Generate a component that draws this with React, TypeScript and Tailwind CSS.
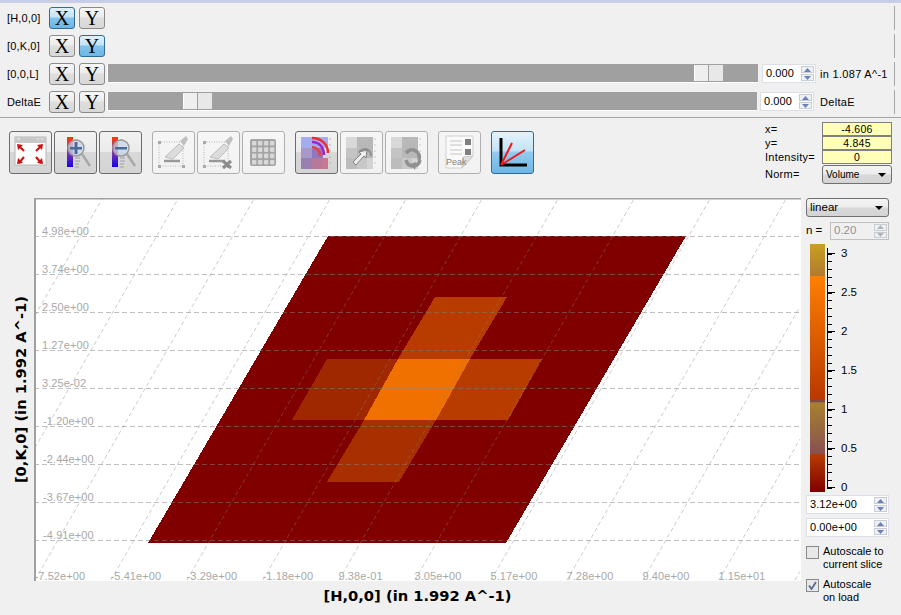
import React from "react";

const sans = "font-['Liberation_Sans',Arial,sans-serif]";

const hLines = [
  { y: 236, label: "4.98e+00" },
  { y: 274, label: "3.74e+00" },
  { y: 312, label: "2.50e+00" },
  { y: 350, label: "1.27e+00" },
  { y: 388, label: "3.25e-02" },
  { y: 426, label: "-1.20e+00" },
  { y: 464, label: "-2.44e+00" },
  { y: 502, label: "-3.67e+00" },
  { y: 540, label: "-4.91e+00" },
];

const bottomLabels = [
  "-7.52e+00",
  "-5.41e+00",
  "-3.29e+00",
  "-1.18e+00",
  "9.38e-01",
  "3.05e+00",
  "5.17e+00",
  "7.28e+00",
  "9.40e+00",
  "1.15e+01",
];

const sliceCells = [
  { points: "328,236 686,236 506,543 148,543", fill: "#800000" },
  { points: "435,297 507,297 470,359 398,359", fill: "#b83c00" },
  { points: "327,359 398,359 364,420 292,420", fill: "#a02800" },
  { points: "470,359 542,359 508,420 436,420", fill: "#b83c00" },
  { points: "364,420 436,420 399,482 327,482", fill: "#a83000" },
  { points: "398,359 470,359 436,420 364,420", fill: "#f07000" },
];

const Plot = () => (
  <svg width={767} height={383} viewBox="34 198 767 383" className="block shrink-0 overflow-visible bg-white">
    {sliceCells.map((c) => (
      <polygon key={c.points} points={c.points} fill={c.fill} shapeRendering="crispEdges" />
    ))}
    {hLines.map((l) => (
      <line key={l.y} x1={34} x2={800} y1={l.y + 0.5} y2={l.y + 0.5} stroke="#808080" strokeOpacity={0.5} strokeDasharray="5 3" />
    ))}
    {Array.from({ length: 13 }, (_, i) => i - 2).map((k) => {
      // clip the sloped grid lines to the canvas by hand, the svg itself overflows for the labels
      const x0 = 35 + 76 * k;
      const startY = x0 < 35 ? 580 - ((35 - x0) * 381) / 219 : 580;
      const startX = Math.max(x0, 35);
      const endX = Math.min(x0 + 219, 800);
      const endY = 580 - ((endX - x0) * 381) / 219;
      return (
        <line
          key={k}
          x1={startX}
          y1={startY}
          x2={endX}
          y2={endY}
          stroke="#808080"
          strokeOpacity={0.42}
          strokeDasharray="4 3"
        />
      );
    })}
    {hLines.map((l) => (
      <text key={l.label} x={l.label.startsWith("-") ? 43 : 42} y={l.y - 1} fontSize={11} letterSpacing={0.1} fill="#a8a8a8" fontFamily="'Liberation Sans',Arial,sans-serif">
        {l.label}
      </text>
    ))}
    {bottomLabels.map((t, i) => (
      <text key={t} x={34.5 + 76 * i} y={580} fontSize={11} letterSpacing={0.1} fill="#a8a8a8" fontFamily="'Liberation Sans',Arial,sans-serif">
        {t}
      </text>
    ))}
    <rect x={34} y={198} width={767} height={1.5} fill="#a0a0a0" />
    <rect x={34} y={198} width={2} height={383} fill="#a0a0a0" />
  </svg>
);

const AxisButton = ({ label, active }: { label: string; active?: boolean }) => (
  <button
    className={`flex h-[22px] w-[26px] items-center justify-center rounded-[3px] border font-['Liberation_Serif',serif] text-[20px] leading-none text-black ${
      active
        ? "border-[#2f6b96] bg-[linear-gradient(#e0f1fb,#c4e3f6_45%,#84c4ec_50%,#6cb6e6)]"
        : "border-[#8a8a8a] bg-[linear-gradient(#f7f7f7,#ececec_45%,#dedede_50%,#d8d8d8)]"
    }`}
  >
    {label}
  </button>
);

const Arrows = ({ dim }: { dim?: boolean }) => (
  <div className="flex h-full w-[13px] flex-col gap-px">
    {[0, 1].map((i) => (
      <div key={i} className="flex flex-1 items-center justify-center border border-[#c8ccd4] bg-[#eef0f4]">
        <svg width={7} height={4} viewBox="0 0 7 4">
          <polygon points={i === 0 ? "3.5,0 7,4 0,4" : "0,0 7,0 3.5,4"} fill={dim ? "#b4b4b4" : "#6a80b8"} />
        </svg>
      </div>
    ))}
  </div>
);

const Spin = ({ value, className }: { value: string; className: string }) => (
  <div className={`flex items-center justify-between border border-[#dcdfe6] bg-white py-px pr-px pl-[3px] text-[11px] tracking-[0.1px] text-black ${className}`}>
    <span>{value}</span>
    <Arrows />
  </div>
);

const Slider = ({ width, thumbAt }: { width: string; thumbAt: string }) => (
  <div className={`mb-px flex h-[19px] items-stretch border-b border-l border-white bg-[#a0a0a0] ${width}`}>
    <div className={`${thumbAt} shrink-0`} />
    <div className="my-px flex gap-px">
      <div className="w-[14px] border-l border-white bg-[#efefef]" />
      <div className="w-[14px] bg-[#e8e8e8]" />
    </div>
  </div>
);

const Row = ({
  name,
  xOn,
  yOn,
  children,
}: {
  name: string;
  xOn?: boolean;
  yOn?: boolean;
  children?: React.ReactNode;
}) => (
  <div className="flex h-[22px] items-center">
    <div className="w-[49px] pl-[7px] text-[11px] tracking-[0.15px] text-black">{name}</div>
    <AxisButton label="X" active={xOn} />
    <div className="w-[4px]" />
    <AxisButton label="Y" active={yOn} />
    <div className="flex flex-1 items-center pl-[2px]">{children}</div>
    <div className="mr-[6px] h-[24px] w-px bg-[#a8a8a8]" />
  </div>
);

const ToolButton = ({
  children,
  variant = "normal",
  className = "",
}: {
  children: React.ReactNode;
  variant?: "normal" | "off" | "on";
  className?: string;
}) => {
  const look =
    variant === "on"
      ? "border-[#2f6b96] bg-[linear-gradient(#e4f3fc,#c4e3f6_45%,#94cbee_50%,#6cb6e6)]"
      : variant === "off"
        ? "border-[#b0b0b0] bg-[linear-gradient(#f6f6f6,#f2f2f2)]"
        : "border-[#6c6c6c] bg-[linear-gradient(#f2f2f2,#ebebeb_48%,#d8d8d8_50%,#d4d4d4)]";
  return (
    <div className={`h-[43px] w-[43px] shrink-0 rounded-[3px] border-[1.5px] ${look} ${className}`}>
      <svg width={40} height={40} viewBox="0 0 40 40" className="block">
        {children}
      </svg>
    </div>
  );
};

const ExpandIcon = () => (
  <g>
    <rect x={5} y={5} width={31} height={28} fill="#fff" stroke="#b8b8b8" />
    <rect x={5} y={5} width={31} height={6} fill="#c8c8c8" />
    <path d="M7 7h3M27 7h2M31 7h2" stroke="#f0f0f0" />
    <g fill="none" stroke="#d01010" strokeWidth={2}>
      <path d="M9 14 L14 19M9 31 L14 25M31 14 L26 19M31 31 L26 25" />
    </g>
    <g fill="#d01010">
      <polygon points="7,12 13,13 8,18" />
      <polygon points="7,32 8,26 13,31" />
      <polygon points="33,12 27,13 32,18" />
      <polygon points="33,32 32,26 27,31" />
    </g>
  </g>
);

const ZoomIcon = ({ plus, id }: { plus?: boolean; id: string }) => (
  <g>
    <defs>
      <linearGradient id={id} x1="0" y1="0" x2="0" y2="1">
        <stop offset="0" stopColor="#ff3a00" />
        <stop offset="0.45" stopColor="#9040a0" />
        <stop offset="1" stopColor="#1800f0" />
      </linearGradient>
    </defs>
    <rect x={12} y={5} width={6} height={30} fill={`url(#${id})`} />
    <path d="M20 8h3M20 26h5M20 29h5M20 32h4M20 35h4" stroke="#a0a0a0" strokeWidth={1} />
    <path d="M27 22 L35 34" stroke="#a8a8a8" strokeWidth={2.5} />
    <circle cx={21} cy={16} r={8} fill="#c8d4e8" fillOpacity={0.75} stroke="#9a9a9a" strokeWidth={1.5} />
    <rect x={15} y={15} width={12} height={2.5} fill="#4a6a9a" />
    {plus && <rect x={19.5} y={10} width={3} height={12} fill="#4a6a9a" />}
  </g>
);

const BrushIcon = ({ cross }: { cross?: boolean }) => (
  <g>
    <rect x={6} y={10} width={24} height={24} fill="none" stroke="#b4b4b4" strokeDasharray="1 1.5" />
    <g fill="#a8a8a8">
      <rect x={5} y={9} width={3} height={3} />
      <rect x={5} y={33} width={3} height={3} />
      <rect x={29} y={33} width={3} height={3} />
    </g>
    <path d="M12 25 L26 12 L31 16 L20 27 Z" fill="#dcdcdc" stroke="#bcbcbc" />
    <path d="M27 9 L33 4 L35 7 L31 14 Z" fill="#c0c0c0" />
    <path d="M11 29 H27" stroke="#989898" strokeWidth={2.5} />
    {cross && <path d="M25 29 L33 36 M33 29 L25 36" stroke="#8c8c8c" strokeWidth={3} />}
  </g>
);

const GridIcon = () => (
  <g>
    <rect x={7} y={7} width={26} height={27} rx={2} fill="#a4a4a4" />
    {[0, 1, 2, 3].map((r) =>
      [0, 1, 2, 3].map((c) => (
        <rect key={`${r}-${c}`} x={9 + c * 6} y={9 + r * 6.3} width={4.4} height={4.6} rx={1} fill="#d8d8d8" />
      )),
    )}
  </g>
);

const SliceIcon = () => (
  <g>
    <rect x={5} y={5} width={11} height={11} fill="#a4acf0" />
    <rect x={5} y={16} width={11} height={10} fill="#a898c8" />
    <rect x={5} y={26} width={11} height={11} fill="#9880b0" />
    <rect x={16} y={5} width={16} height={11} fill="#a4acf0" />
    <rect x={16} y={16} width={11} height={10} fill="#9078c0" />
    <rect x={16} y={26} width={10} height={11} fill="#b87898" />
    <rect x={26} y={26} width={6} height={11} fill="#c87890" />
    <path d="M16 6 C25 6 32 12 32 21" fill="none" stroke="#e83030" strokeWidth={2.5} />
    <path d="M16 10 C23 10 28 15 28 23" fill="none" stroke="#a020d0" strokeWidth={2.5} />
    <path d="M16 15 C20 15 24 18 24 24" fill="none" stroke="#e84040" strokeWidth={2.5} />
    <path d="M33 7h2M33 13h2M33 19h2M33 25h2M33 31h2" stroke="#b0b0b0" />
  </g>
);

const GraySlice = () => (
  <g>
    <rect x={5} y={5} width={11} height={11} fill="#d8d8d8" />
    <rect x={5} y={16} width={11} height={10} fill="#c4c4c4" />
    <rect x={5} y={26} width={11} height={11} fill="#bcbcbc" />
    <rect x={16} y={5} width={16} height={21} fill="#b8b8b8" />
    <rect x={16} y={26} width={10} height={11} fill="#c8c8c8" />
    <rect x={26} y={26} width={6} height={11} fill="#d4d4d4" />
    <path d="M33 7h2M33 13h2M33 19h2M33 25h2M33 31h2" stroke="#c8c8c8" />
  </g>
);

const PeakIcon = () => (
  <g>
    <path d="M7 4 H34 V24 L23 36 H7 Z" fill="#fafafa" stroke="#d0d0d0" />
    <path d="M23 36 L24 25 L34 24 Z" fill="#e0e0e0" stroke="#c8c8c8" />
    <path d="M11 9h12M11 13h12M11 18h12M11 22h12" stroke="#c4c4c4" />
    <g fill="#808080">
      <rect x={26} y={7} width={6} height={6} />
      <rect x={26} y={17} width={6} height={6} />
    </g>
    <text x={7} y={33} fontSize={9} fill="#808080" fontFamily="'Liberation Sans',Arial,sans-serif">
      Peak
    </text>
  </g>
);

const toolbar = (
  <div className="flex items-start pl-[9px] pt-[13px]">
    <ToolButton>
      <ExpandIcon />
    </ToolButton>
    <ToolButton className="ml-[2px]">
      <ZoomIcon plus id="zoomIn" />
    </ToolButton>
    <ToolButton className="ml-[2px]">
      <ZoomIcon id="zoomOut" />
    </ToolButton>
    <ToolButton variant="off" className="ml-[10px]">
      <BrushIcon />
    </ToolButton>
    <ToolButton variant="off" className="ml-[2px]">
      <BrushIcon cross />
    </ToolButton>
    <ToolButton variant="off" className="ml-[2px]">
      <GridIcon />
    </ToolButton>
    <ToolButton className="ml-[10px]">
      <SliceIcon />
    </ToolButton>
    <ToolButton variant="off" className="ml-[2px]">
      <GraySlice />
      <path d="M18 20 C24 14 30 18 30 24" fill="none" stroke="#909090" strokeWidth={2} />
      <path d="M12 30 L20 22 L18 20 L26 18 L25 26 L23 24 L15 33 Z" fill="#eee" stroke="#808080" />
    </ToolButton>
    <ToolButton variant="off" className="ml-[2px]">
      <GraySlice />
      <path d="M20 21 C26 14 35 20 33 28" fill="none" stroke="#909090" strokeWidth={3.5} />
      <path d="M34 28 C32 36 22 36 20 28" fill="none" stroke="#909090" strokeWidth={3.5} />
      <polygon points="24,32 30,30 29,38" fill="#909090" />
    </ToolButton>
    <ToolButton variant="off" className="ml-[10px]">
      <PeakIcon />
    </ToolButton>
    <ToolButton variant="on" className="ml-[10px]">
      <path d="M9 6 V33 H35" fill="none" stroke="#000" strokeWidth={3} />
      <path d="M9 33 L20 11 M9 33 L33 18" fill="none" stroke="#f01818" strokeWidth={2} />
    </ToolButton>
  </div>
);

const readouts = [
  { name: "x=", value: "-4.606" },
  { name: "y=", value: "4.845" },
  { name: "Intensity=", value: "0" },
];

const Combo = ({ label, className }: { label: string; className: string }) => (
  <div
    className={`flex items-center justify-between rounded-[3px] border border-[#707070] bg-[linear-gradient(#f4f4f4,#ececec_45%,#d8d8d8_55%,#d4d4d4)] pl-[3px] pr-[5px] text-black ${className}`}
  >
    <span>{label}</span>
    <svg width={8} height={4} viewBox="0 0 8 4">
      <polygon points="0,0 8,0 4,4" fill="#000" />
    </svg>
  </div>
);

const Info = () => (
  <div className="mr-[9px] flex w-[127px] flex-col pt-[4px] text-[11px] tracking-[0.25px]">
    {readouts.map((r) => (
      <div key={r.name} className="flex h-[14px] items-center">
        <div className="w-[57px] text-black">{r.name}</div>
        <div className="h-full w-[70px] border border-[#808080] bg-[#ffffb8] text-center text-[10.5px] leading-[12px] text-black">
          {r.value}
        </div>
      </div>
    ))}
    <div className="mt-px flex h-[19px] items-center">
      <div className="w-[57px] text-black">Norm=</div>
      <Combo label="Volume" className="h-full w-[70px] text-[10px] tracking-normal" />
    </div>
  </div>
);

const Colorbar = () => {
  const majors = [
    { y: 253, t: "3" },
    { y: 292, t: "2.5" },
    { y: 331, t: "2" },
    { y: 370, t: "1.5" },
    { y: 409, t: "1" },
    { y: 448, t: "0.5" },
    { y: 487, t: "0" },
  ];
  const minors = Array.from({ length: 31 }, (_, i) => 487.5 - i * 7.8);
  return (
    <svg width={84} height={248} viewBox="806 244 84 248" className="mt-[4px] block">
      <defs>
        <linearGradient id="cmap" x1="0" y1="0" x2="0" y2="1">
          <stop offset="0" stopColor="#c8a020" />
          <stop offset="0.129" stopColor="#b07a30" />
          <stop offset="0.129" stopColor="#ff8000" />
          <stop offset="0.63" stopColor="#b83800" />
          <stop offset="0.63" stopColor="#804848" />
          <stop offset="0.637" stopColor="#804848" />
          <stop offset="0.64" stopColor="#a88030" />
          <stop offset="0.847" stopColor="#885050" />
          <stop offset="0.847" stopColor="#b83c00" />
          <stop offset="1" stopColor="#800000" />
        </linearGradient>
      </defs>
      <rect x={810} y={244} width={15} height={248} fill="url(#cmap)" />
      <line x1={827.5} x2={827.5} y1={248} y2={488} stroke="#000" />
      {minors.map((y) => (
        <line key={y} x1={827} x2={832} y1={Math.round(y) + 0.5} y2={Math.round(y) + 0.5} stroke="#000" />
      ))}
      {majors.map((m) => (
        <g key={m.t}>
          <line x1={827} x2={835} y1={m.y + 0.5} y2={m.y + 0.5} stroke="#000" />
          <text x={841} y={m.y + 4} fontSize={11.5} fill="#000" fontFamily="'Liberation Sans',Arial,sans-serif">
            {m.t}
          </text>
        </g>
      ))}
    </svg>
  );
};

const Check = ({ on, lines, className }: { on?: boolean; lines: string[]; className: string }) => (
  <div className={`flex items-start gap-[4px] text-[11px] leading-[13px] text-black ${className}`}>
    <div className="mt-px flex h-[13px] w-[13px] items-center justify-center border border-[#8a8a8a] bg-[#e8e8e8]">
      {on && (
        <svg width={9} height={9} viewBox="0 0 9 9">
          <path d="M1 4.5 L3.5 8 L8 1" fill="none" stroke="#5a6a90" strokeWidth={1.8} />
        </svg>
      )}
    </div>
    <div>
      {lines.map((l) => (
        <div key={l}>{l}</div>
      ))}
    </div>
  </div>
);

const Side = () => (
  <div className="ml-[5px] flex w-[84px] flex-col text-[11.5px]">
    <Combo label="linear" className="h-[19px] w-[83px] text-[11.5px]" />
    <div className="mt-[5px] flex h-[18px] items-center">
      <span className="w-[24px] text-black">n =</span>
      <div className="flex h-full w-[59px] items-center justify-between border border-[#c0c0c0] bg-[#f0f0f0] py-px pr-px pl-[3px] text-[#909090]">
        <span>0.20</span>
        <Arrows dim />
      </div>
    </div>
    <Colorbar />
    <Spin value="3.12e+00" className="mt-[3px] h-[19px] w-[83px]" />
    <Spin value="0.00e+00" className="mt-[4px] h-[19px] w-[83px]" />
    <Check lines={["Autoscale to", "current slice"]} className="mt-[8px]" />
    <Check on lines={["Autoscale", "on load"]} className="mt-[7px]" />
  </div>
);

export default function App() {
  return (
    <div className={`flex h-[615px] w-[901px] flex-col overflow-hidden bg-[#f0f0f0] ${sans}`}>
      <div className="h-[118px] shrink-0 border-t-[3px] border-b border-t-[#c8cee8] border-b-[#a4a4a4]">
        <div className="flex flex-col gap-[6px] pt-[4px]">
          <Row name="[H,0,0]" xOn />
          <Row name="[0,K,0]" yOn />
          <Row name="[0,0,L]">
            <Slider width="w-[651px]" thumbAt="w-[586px]" />
            <Spin value="0.000" className="mb-px ml-[4px] h-[19px] w-[54px]" />
            <span className="ml-[4px] text-[11px] tracking-[0.3px] text-black">in 1.087 A^-1</span>
          </Row>
          <Row name="DeltaE">
            <Slider width="w-[650px]" thumbAt="w-[75px]" />
            <Spin value="0.000" className="mb-px ml-[3px] h-[19px] w-[54px]" />
            <span className="ml-[6px] text-[11px] tracking-[0.3px] text-black">DeltaE</span>
          </Row>
        </div>
      </div>
      <div className="flex h-[80px] shrink-0 items-start justify-between">
        {toolbar}
        <Info />
      </div>
      <div className="flex flex-1 items-start">
        <div className="flex h-[383px] w-[34px] shrink-0 items-center justify-center pl-[8px]">
          <span className="rotate-180 font-['DejaVu_Sans',sans-serif] text-[14.7px] font-bold whitespace-nowrap text-black [writing-mode:vertical-rl]">[0,K,0] (in 1.992 A^-1)</span>
        </div>
        <div className="flex w-[767px] shrink-0 flex-col items-center">
          <Plot />
          <span className="mt-[4px] font-['DejaVu_Sans',sans-serif] text-[14.7px] font-bold whitespace-nowrap text-black">[H,0,0] (in 1.992 A^-1)</span>
        </div>
        <Side />
      </div>
    </div>
  );
}
